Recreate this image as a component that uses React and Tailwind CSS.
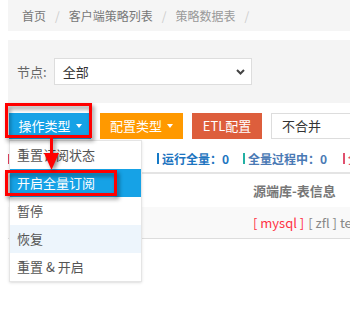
import React from 'react';

const menuItems = [
  { label: '重置订阅状态', cls: 'text-[#555] bg-white' },
  { label: '开启全量订阅', cls: 'text-white bg-[#16a2e6]' },
  { label: '暂停', cls: 'text-[#555] bg-white' },
  { label: '恢复', cls: 'text-[#555] bg-[#edf5fc]' },
  { label: '重置 & 开启', cls: 'text-[#555] bg-white' },
];

const Caret = () => (
  <span className="inline-block ml-[5px] w-0 h-0 border-l-[3px] border-r-[3px] border-t-[4px] border-l-transparent border-r-transparent border-t-white" />
);

export default function App() {
  return (
    <div className="relative w-[350px] h-[311px] overflow-hidden bg-white pl-2 font-['Noto_Sans_CJK_SC','Liberation_Sans',sans-serif]">
      {/* breadcrumb */}
      <div className="h-[31px] bg-[#f5f5f5] flex items-center pl-[14px] text-[12px] text-[#777] whitespace-nowrap">
        <span>首页</span>
        <span className="mx-[9px] text-[#ccc]">/</span>
        <span>客户端策略列表</span>
        <span className="mx-[9px] text-[#ccc]">/</span>
        <span className="text-[#999]">策略数据表</span>
        <span className="mx-[9px] text-[#ccc]">/</span>
      </div>

      {/* filter panel */}
      <div className="mt-[9px] h-[63px] bg-[#f4f4f4] flex items-center pl-[9px]">
        <span className="text-[13px] text-[#666]">节点:</span>
        <div className="ml-[7px] w-[198px] h-[27px] bg-white border border-[#ddd] flex items-center justify-between pl-[8px] pr-[6px]">
          <span className="text-[13px] text-[#333]">全部</span>
          <svg width="9" height="6" viewBox="0 0 9 6">
            <path d="M1 1 L4.5 4.5 L8 1" fill="none" stroke="#444" strokeWidth="2" />
          </svg>
        </div>
      </div>

      {/* action buttons */}
      <div className="mt-[10px] flex items-center h-[26px] pl-px whitespace-nowrap">
        <button className="shrink-0 w-[82px] h-[26px] bg-[#16a2e6] text-white text-[13px] flex items-center justify-center">
          操作类型<Caret />
        </button>
        <button className="shrink-0 ml-[9px] w-[83px] h-[26px] bg-[#ff9900] text-white text-[13px] flex items-center justify-center">
          配置类型<Caret />
        </button>
        <button className="shrink-0 ml-[9px] w-[70px] h-[26px] bg-[#dd5e3c] text-white text-[13px] flex items-center justify-center">
          ETL配置
        </button>
        <div className="shrink-0 ml-[9px] w-[90px] h-[26px] border border-[#ddd] bg-white flex items-center pl-[10px] text-[13px] text-[#333]">
          不合并
        </div>
      </div>

      {/* stats */}
      <div className="mt-[12px] h-[15px] flex items-center text-[12px] font-bold whitespace-nowrap overflow-hidden">
        <div className="shrink-0 w-[149px] flex items-center overflow-hidden">
          <span className="w-[2px] h-[10px] bg-[#e0405e] mr-[3px]" />
          <span className="text-[#e0405e]">失败：0</span>
        </div>
        <div className="shrink-0 w-[86px] flex items-center">
          <span className="w-[2px] h-[11px] bg-[#1479c6] mr-[3px]" />
          <span className="text-[#1d74c0]">运行全量：0</span>
        </div>
        <div className="shrink-0 w-[100px] flex items-center">
          <span className="w-[2px] h-[11px] bg-[#23b0a4] mr-[3px]" />
          <span className="text-[#4a79b4]">全量过程中：0</span>
        </div>
        <div className="shrink-0 flex items-center">
          <span className="w-[2px] h-[11px] bg-[#e0506e] mr-[3px]" />
          <span className="text-[#e0506e]">全量完成：0</span>
        </div>
      </div>

      {/* table */}
      <div className="mt-[6px] border-t-2 border-[#e4e4e4]">
        <div className="h-[33px] flex items-center pl-[245px] text-[13px] font-bold text-[#777] whitespace-nowrap">
          源端库-表信息
        </div>
        <div className="h-[32px] bg-[#f9f9f9] border-b border-[#ddd] flex items-center pl-[245px] text-[13px] text-[#888] whitespace-nowrap overflow-hidden">
          <span className="shrink-0 text-[#ff3344]">[ mysql ]</span>
          <span className="shrink-0 ml-[4px]">[ zfl ] test</span>
        </div>
      </div>

      {/* dropdown menu */}
      <div className="absolute left-[9px] top-[140px] w-[133px] bg-white border border-[#e5e5e5] shadow-sm">
        {menuItems.map((item) => (
          <div key={item.label} className={`h-[28px] flex items-center pl-[7px] text-[13px] whitespace-nowrap ${item.cls}`}>
            {item.label}
          </div>
        ))}
      </div>

      {/* annotations */}
      <div className="absolute left-[5px] top-[103px] w-[87px] h-[35px] border-[3px] border-[#ff0000] drop-shadow-[2px_3px_2px_rgba(0,0,0,0.45)]" />
      <div className="absolute left-[5px] top-[170px] w-[112px] h-[26px] border-[3px] border-[#ff0000] drop-shadow-[2px_3px_2px_rgba(0,0,0,0.45)]" />
      <svg className="absolute left-[42px] top-[137px] drop-shadow-[2px_2px_2px_rgba(0,0,0,0.45)]" width="20" height="36" viewBox="0 0 20 36">
        <rect x="8" y="0" width="3" height="18" fill="#ff0000" />
        <polygon points="2,16 17,16 9.5,33" fill="#ff0000" />
      </svg>
    </div>
  );
}
